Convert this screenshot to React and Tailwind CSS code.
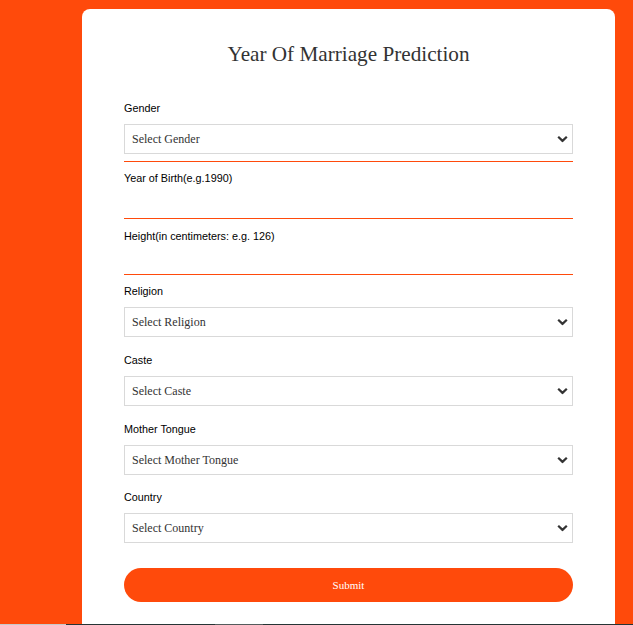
import React from "react";

const serif = { fontFamily: '"Liberation Serif", "Times New Roman", serif' };

function Chevron() {
  return (
    <svg
      className="pointer-events-none absolute right-[5px] top-1/2 -translate-y-1/2"
      width="11"
      height="7"
      viewBox="0 0 11 7"
      fill="none"
    >
      <path d="M1.2 1.2 L5.5 5.4 L9.8 1.2" stroke="#333" strokeWidth="2.2" />
    </svg>
  );
}

function Label({ children }) {
  return (
    <label className="block text-[10.8px] leading-[14px] text-black font-['Liberation_Sans',Arial,sans-serif]">
      {children}
    </label>
  );
}

function SelectField({ label, placeholder, options = [], className = "" }) {
  return (
    <div className={className}>
      <Label>{label}</Label>
      <div className="relative mt-[9px]">
        <select
          defaultValue=""
          className="block h-[30px] w-full appearance-none border border-[#d9d9d9] bg-white pl-[7px] pr-6 text-[12px] text-[#333] outline-none"
          style={serif}
        >
          <option value="">{placeholder}</option>
          {options.map((o) => (
            <option key={o}>{o}</option>
          ))}
        </select>
        <Chevron />
      </div>
    </div>
  );
}

function TextField({ label, h, mb }) {
  return (
    <div className={mb}>
      <Label>{label}</Label>
      <input
        type="text"
        className={`block w-full border-b border-[#ff4a0b] bg-transparent text-[12px] outline-none ${h}`}
        style={serif}
      />
    </div>
  );
}

export default function App() {
  return (
    <div className="w-full bg-[#ff4a0b]">
      <div className="h-[624px] overflow-hidden pt-[9px]">
        <div className="ml-[82px] h-[640px] w-[533px] rounded-[8px] bg-white px-[42px] pt-[33px]">
          <h1
            className="text-center text-[21.2px] leading-[24px] text-[#333]"
            style={serif}
          >
            Year Of Marriage Prediction
          </h1>

          <form className="mt-[35px]" onSubmit={(e) => e.preventDefault()}>
            <div className="border-b border-[#ff4a0b] pb-[7px]">
              <SelectField
                label="Gender"
                placeholder="Select Gender"
                options={["Male", "Female"]}
              />
            </div>
            <div className="mt-[9px]">
              <TextField label="Year of Birth(e.g.1990)" h="h-[34px]" mb="mb-[10px]" />
              <TextField label="Height(in centimeters: e.g. 126)" h="h-[32px]" mb="mb-[9px]" />
            </div>

            <SelectField label="Religion" placeholder="Select Religion" />
            <SelectField
              label="Caste"
              placeholder="Select Caste"
              className="mt-[16px]"
            />
            <SelectField
              label="Mother Tongue"
              placeholder="Select Mother Tongue"
              className="mt-[16px]"
            />
            <SelectField
              label="Country"
              placeholder="Select Country"
              className="mt-[15px]"
            />

            <button
              type="submit"
              className="mt-[25px] block h-[34px] w-full rounded-full bg-[#ff4a0b] text-[11px] leading-[32px] text-white"
              style={serif}
            >
              Submit
            </button>
          </form>
        </div>
      </div>
      <div className="flex h-[30px] bg-[#263434]">
        <div className="w-[66px] bg-[#c8c8c8]" />
        <div className="w-[149px]" />
        <div className="w-[48px] bg-[#555c5c]" />
      </div>
    </div>
  );
}
